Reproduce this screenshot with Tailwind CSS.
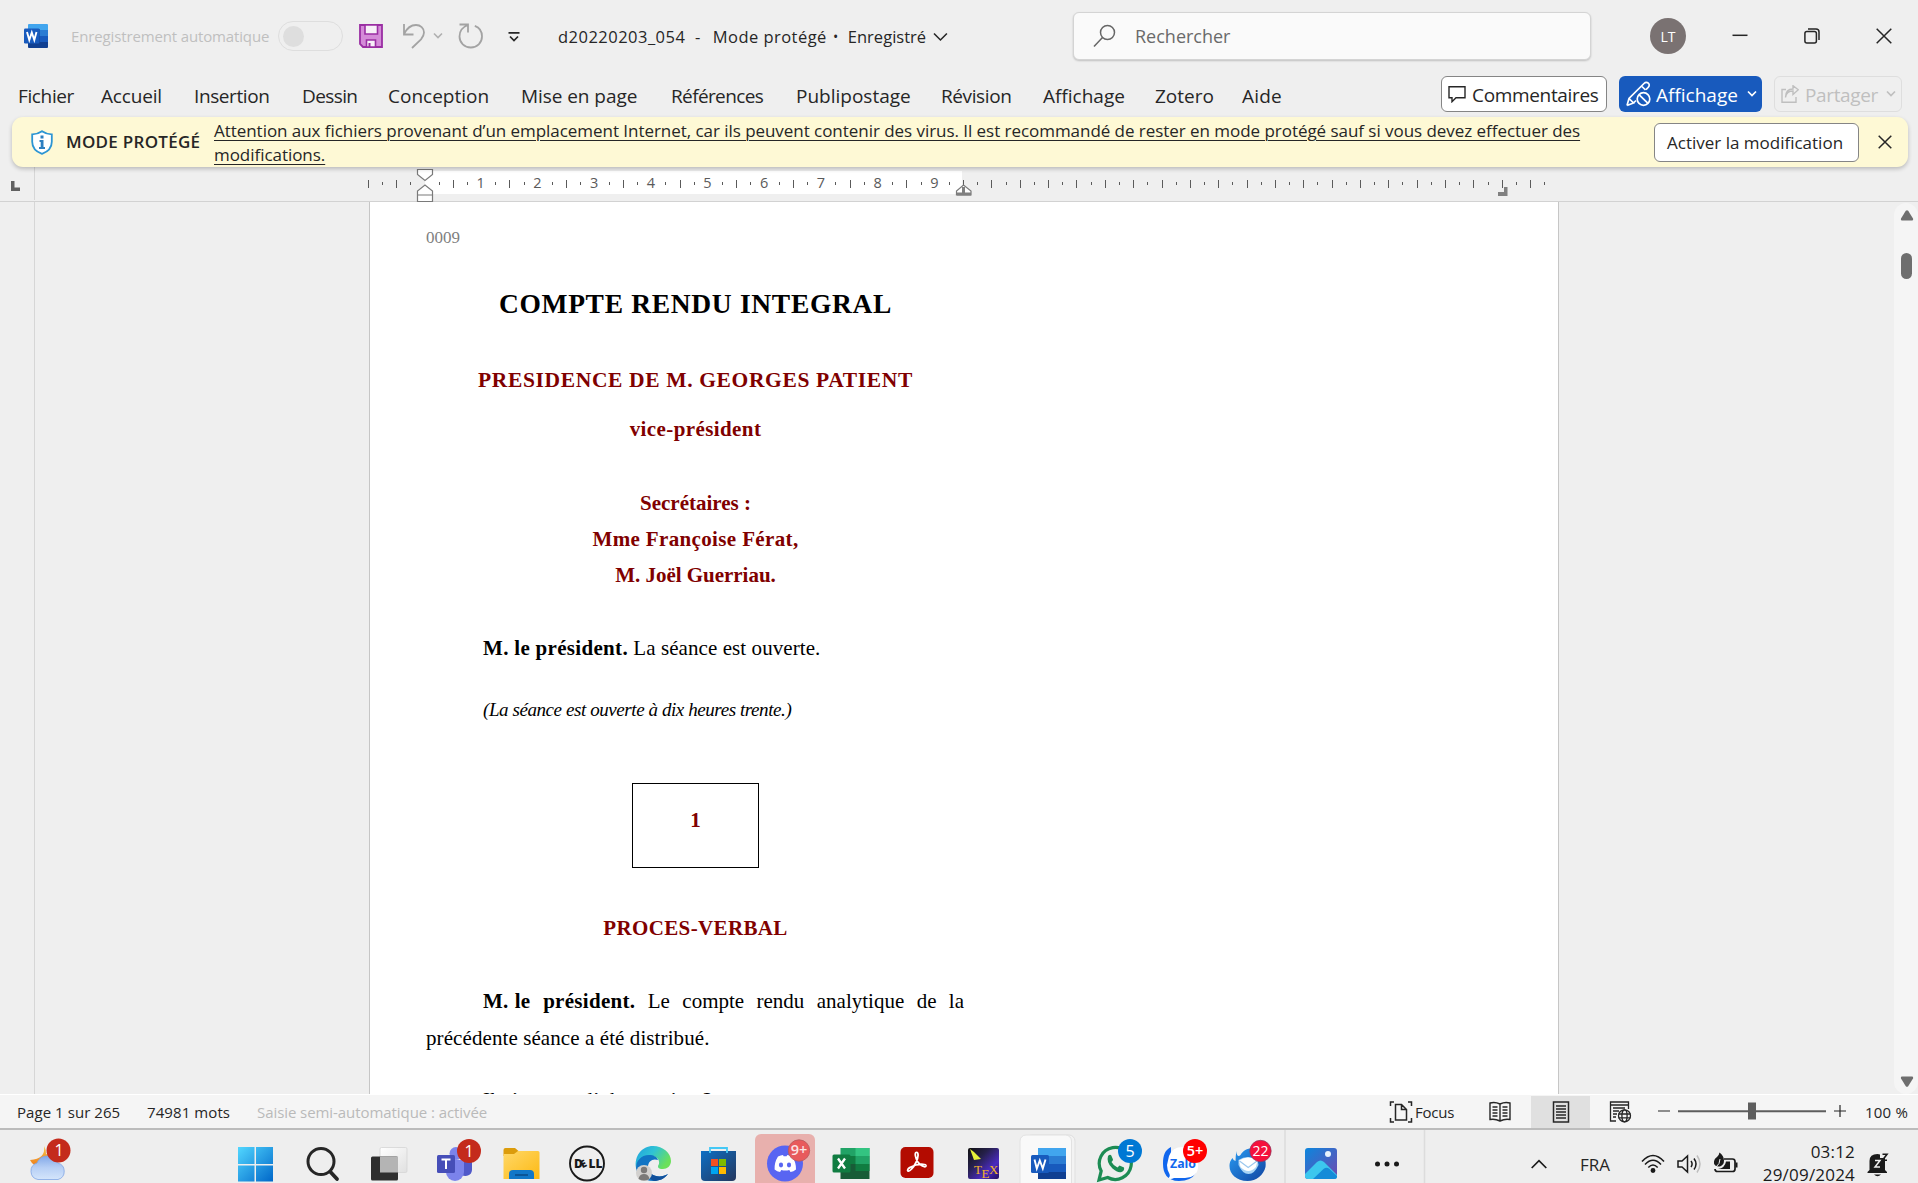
<!DOCTYPE html>
<html lang="fr">
<head>
<meta charset="utf-8">
<title>d20220203_054 - Word</title>
<script src="https://cdn.jsdelivr.net/npm/@tailwindcss/browser@4"></script>
</head>
<body class="w-[1918px] h-[1183px] overflow-hidden flex flex-col bg-[#efefef] font-['Open_Sans','Noto_Sans',sans-serif] text-[#262626] whitespace-nowrap">

<!-- Title bar -->
<header class="h-[70px] shrink-0 flex items-start">
  <svg class="w-[24px] h-[24px] ml-[24px] mt-[24px] shrink-0" viewBox="0 0 24 24">
    <path d="M5 0h18a1 1 0 0 1 1 1v5H4V1a1 1 0 0 1 1-1z" fill="#41a5ee"/><path d="M4 6h20v6H4z" fill="#2b7cd3"/><path d="M4 12h20v6H4z" fill="#185abd"/><path d="M4 18h20v5a1 1 0 0 1-1 1H5a1 1 0 0 1-1-1z" fill="#103f91"/>
    <path d="M5 5h11v14H5z" fill="#0b2f6b" opacity=".5"/><rect y="4.500" width="15.500" height="15" rx="1.200" fill="#185abd"/><path d="M3 8l2.300 8L7.800 8.500 10.300 16 12.500 8" fill="none" stroke="#fff" stroke-width="1.900"/>
  </svg>
  <span class="ml-[23px] w-[207px] text-[15px] tracking-[-0.14px] leading-[73px] text-[#bfbfbf]">Enregistrement automatique</span>
  <div class="w-[65px] h-[30px] mt-[21px] rounded-full border border-[#dedede] p-[4px] shrink-0"><div class="size-[21px] rounded-full bg-[#dedede]"></div></div>
  <svg class="w-[24px] h-[24px] ml-[16px] mt-[24px] shrink-0" viewBox="0 0 24 24"><path d="M1 1h22v22H4l-3-3z" fill="#d48bd8" stroke="#9a2ea3" stroke-width="1.800"/><path d="M6 1h12.500v9H6z" fill="#f7f0f8" stroke="#9a2ea3" stroke-width="1.600"/><path d="M7.500 23v-7h9v7z" fill="#f7f0f8" stroke="#9a2ea3" stroke-width="1.600"/><path d="M9.500 19h2v4h-2z" fill="#9a2ea3"/></svg>
  <svg class="w-[24px] h-[26px] ml-[19px] mt-[23px] shrink-0" viewBox="0 0 24 26" fill="none" stroke="#a3a3a3" stroke-width="1.800"><path d="M2 1v10.500h9.500M2 11C5 5 9 2 14 2c4.500 0 8 3.200 8 7.500 0 3-1.500 5-3 6.800L10 25"/></svg>
  <svg class="w-[10px] h-[7px] ml-[7px] mt-[32px] shrink-0" viewBox="0 0 10 7" fill="none" stroke="#b0b0b0" stroke-width="1.600"><path d="M1 1.500l4 4 4-4"/></svg>
  <svg class="w-[26px] h-[26px] ml-[15px] mt-[23px] shrink-0" viewBox="0 0 26 26" fill="none" stroke="#a3a3a3" stroke-width="1.800"><path d="M1.500 1.500h8.500v8M10 2C4.500 4 1.500 8.500 1.500 13.500c0 6.200 5 11 11.300 11S24 19.700 24 13.500c0-5-3-9.200-7.200-10.700"/></svg>
  <svg class="w-[12px] h-[12px] ml-[24px] mt-[31px] shrink-0" viewBox="0 0 12 12" fill="none" stroke="#262626" stroke-width="1.700"><path d="M.5 1.800h11M2 5.500l4 4 4-4"/></svg>
  <div class="flex ml-[38px] w-[390px] text-[16.500px] leading-[73px]">
    <span class="w-[138px] tracking-[0.48px]">d20220203_054</span><span class="w-[18px]">-</span><span class="w-[121px] tracking-[0.45px]">Mode protégé</span><span class="w-[15px] text-[14px]">•</span><span class="w-[86px] tracking-[0.02px]">Enregistré</span>
    <svg class="w-[15px] h-[10px] mt-[32px]" viewBox="0 0 15 10" fill="none" stroke="#262626" stroke-width="1.600"><path d="M1 1.500l6.500 6.500L14 1.500"/></svg>
  </div>
  <div class="ml-[125px] mt-[12px] w-[518px] h-[48px] rounded-[6px] bg-[#fafafa] border border-[#d4d4d4] shadow-[0_1px_2px_rgba(0,0,0,0.2)] flex items-center shrink-0">
    <svg class="w-[24px] h-[24px] ml-[19px]" viewBox="0 0 24 24" fill="none" stroke="#666" stroke-width="1.500"><circle cx="14.500" cy="8.500" r="7"/><path d="M9.500 13.500L1 22.500"/></svg>
    <span class="ml-[18px] mt-[1px] text-[18px] text-[#6a6a6a]">Rechercher</span>
  </div>
  <div class="ml-[59px] mt-[18px] size-[36px] rounded-full bg-[#7a7272] text-white text-[14px] leading-[37px] text-center shrink-0">LT</div>
  <svg class="w-[16px] h-[16px] ml-[46px] mt-[28px] shrink-0" viewBox="0 0 16 16" stroke="#262626" stroke-width="1.500"><path d="M.5 7.300h15"/></svg>
  <svg class="w-[16px] h-[16px] ml-[56px] mt-[28px] shrink-0" viewBox="0 0 16 16" fill="none" stroke="#262626" stroke-width="1.500"><rect x=".9" y="3.500" width="11.500" height="11.500" rx="2"/><path d="M4 1h8a3 3 0 0 1 3 3v8"/></svg>
  <svg class="w-[16px] h-[16px] ml-[56px] mt-[28px] shrink-0" viewBox="0 0 16 16" fill="none" stroke="#262626" stroke-width="1.500"><path d="M.7.700l14.600 14.600M15.300.700L.7 15.300"/></svg>
</header>

<!-- Ribbon tabs -->
<nav class="h-[47px] shrink-0 flex items-start">
  <div class="w-[1441px] pl-[18px] grid grid-cols-[83px_93px_108px_86px_133px_150px_125px_145px_102px_112px_87px_60px] text-[19px] leading-[53px] shrink-0">
    <span class="tracking-[-0.37px]">Fichier</span><span class="tracking-[-0.16px]">Accueil</span><span class="tracking-[-0.4px]">Insertion</span><span class="tracking-[-0.6px]">Dessin</span><span class="tracking-[0px]">Conception</span><span class="tracking-[-0.06px]">Mise en page</span><span class="tracking-[-0.62px]">Références</span><span>Publipostage</span><span class="tracking-[-0.39px]">Révision</span><span>Affichage</span><span>Zotero</span><span class="tracking-[0.2px]">Aide</span>
  </div>
  <div class="mt-[6px] flex gap-[12px] text-[19px] leading-[36px]">
    <div class="w-[166px] h-[36px] rounded-[6px] border border-[#858585] bg-white flex items-center pl-[6px]">
      <svg class="w-[18px] h-[18px] shrink-0" viewBox="0 0 18 18" fill="none" stroke="#262626" stroke-width="1.400"><path d="M1 1.700h16v11H8l-4 4v-4H1z"/></svg>
      <span class="ml-[6px] mt-[2px] tracking-[-0.33px]">Commentaires</span>
    </div>
    <div class="w-[143px] h-[36px] rounded-[6px] bg-[#185abd] text-white flex items-center pl-[7px]">
      <svg class="w-[25px] h-[26px] shrink-0" viewBox="0 0 25 26" fill="none" stroke="#fff" stroke-width="1.700"><path d="M1 24.500l2-7L18 2.500c1.500-1.500 3-1.500 4.300-.3s1.200 2.800-.2 4.300L20 8.700M15.500 5l4 4M3 17.500l4.500 4.500L1 24.500M7.500 22l2.500-2.500"/><circle cx="17.500" cy="18" r="6.300"/><path d="M13 13.700l9 8.700"/></svg>
      <span class="ml-[5px] mt-[2px] w-[91px]">Affichage</span>
      <svg class="w-[10px] h-[7px] mb-[1px]" viewBox="0 0 10 7" fill="none" stroke="#fff" stroke-width="1.700"><path d="M1 1.500l4 4 4-4"/></svg>
    </div>
    <div class="w-[128px] h-[36px] rounded-[6px] border border-[#dedede] text-[#bfbfbf] flex items-center pl-[6px]">
      <svg class="w-[18px] h-[18px] shrink-0" viewBox="0 0 18 18" fill="none" stroke="#bfbfbf" stroke-width="1.400"><path d="M5 4.500H1v12.800h14V12M4.500 12.500C5 8 7.500 6 12 6V9.500l5.300-4.700L12 .700V4C7 4 4.500 7 4.500 12.500z"/></svg>
      <span class="ml-[6px] mt-[2px] w-[81px] tracking-[-0.35px]">Partager</span>
      <svg class="w-[10px] h-[7px] mb-[1px]" viewBox="0 0 10 7" fill="none" stroke="#bfbfbf" stroke-width="1.700"><path d="M1 1.500l4 4 4-4"/></svg>
    </div>
  </div>
</nav>

<!-- Protected view banner -->
<section class="relative z-10 ml-[12px] w-[1896px] h-[50px] shrink-0 rounded-[11px] bg-[#fef9d5] shadow-[0_2px_4px_rgba(0,0,0,0.22)] flex items-center text-[17px]">
  <svg class="w-[22px] h-[25px] ml-[19px] shrink-0" viewBox="0 0 22 25"><path d="M11 1.200c3 2.100 6 3 9.800 3.200v7.300c0 5.800-4 10-9.800 12.200C5.200 21.700 1.200 17.500 1.200 11.700V4.400C5 4.200 8 3.300 11 1.200z" fill="#fff" stroke="#2c95d3" stroke-width="1.800"/><path d="M9.500 5.500h3v3h-3zM8.500 10h4v7h1.500v2H8v-2h1.700v-5H8.500z" fill="#2c7fc0"/></svg>
  <span class="ml-[13px] w-[148px] font-semibold tracking-[0.28px]">MODE PROTÉGÉ</span>
  <div class="w-[1380px] mt-[1px] leading-[24px] underline decoration-1 underline-offset-[3px] tracking-[-0.045px]">Attention aux fichiers provenant d’un emplacement Internet, car ils peuvent contenir des virus. Il est recommandé de rester en mode protégé sauf si vous devez effectuer des<br>modifications.</div>
  <div class="ml-[60px] w-[205px] h-[39px] rounded-[6px] border border-[#858585] bg-white pl-[12px] leading-[37px]">Activer la modification</div>
  <svg class="w-[14px] h-[14px] ml-[19px]" viewBox="0 0 14 14" stroke="#262626" stroke-width="1.500"><path d="M.7.700l12.600 12.600M13.300.700L.7 13.300"/></svg>
</section>

<!-- Ruler -->
<div class="h-[35px] shrink-0 border-b border-[#d2d2d2] flex">
  <div class="w-[35px] h-[33px] border-r border-[#d6d6d6] shrink-0">
    <svg class="w-[34px] h-[33px]" viewBox="0 0 34 33"><path d="M11 14h3.500v6.500H20V24h-9z" fill="#606060"/></svg>
  </div>
  <svg id="ruler" class="w-[1883px] h-[35px] shrink-0 overflow-visible" viewBox="35 167 1883 35">
    <rect x="425" y="171" width="537" height="23" fill="#fff"/>
    <g id="ticks" stroke="#5a5a5a" stroke-width="1"></g>
    <g id="nums" font-size="14.500" fill="#5a5a5a" text-anchor="middle"></g>
    <g fill="#fff" stroke="#7a7a7a" stroke-width="1.200"><path d="M417.500 169.500h15v5l-7.500 6-7.500-6zM417.500 201.500v-10.500l7.500-6 7.500 6v10.500zM417.500 195h15"/><path d="M956.500 195v-4l7-6 7.500 6v4z"/></g>
    <path d="M957 192.500h14v3h-14zM962 187h3v6h-3zM1498 192h6v-5h3.500v9H1498z" fill="#808080"/>
  </svg>
</div>

<!-- Document area -->
<main class="h-[893px] shrink-0 flex overflow-hidden border-b border-white">
  <div class="w-[35px] border-r border-[#d6d6d6] shrink-0"></div>
  <article class="ml-[334px] w-[1190px] shrink-0 bg-white border-x border-[#c6c6c6] pl-[56px] font-['Liberation_Serif',serif] text-[21px] leading-[36px] text-black">
    <div class="w-[539px]">
      <p class="mt-[18px] text-[17px] text-[#7f7f7f]">0009</p>
      <h1 class="mt-[30px] text-center text-[27.500px] font-bold tracking-[0.68px]">COMPTE RENDU INTEGRAL</h1>
      <h2 class="mt-[40px] text-center text-[21.500px] font-bold tracking-[0.64px] text-[#800000]">PRESIDENCE DE M. GEORGES PATIENT</h2>
      <p class="mt-[13px] text-center font-bold tracking-[0.4px] text-[#800000]">vice-président</p>
      <p class="mt-[38px] text-center font-bold text-[#800000]">Secrétaires :</p>
      <p class="text-center font-bold tracking-[0.36px] text-[#800000]">Mme Françoise Férat,</p>
      <p class="text-center font-bold tracking-[-0.02px] text-[#800000]">M. Joël Guerriau.</p>
      <p class="mt-[37px] pl-[57px] tracking-[0.08px]"><b class="tracking-[0.31px]">M. le président.</b> La séance est ouverte.</p>
      <p class="mt-[26px] pl-[57px] italic text-[19px] tracking-[-0.42px]">(La séance est ouverte à dix heures trente.)</p>
      <div class="mt-[55px] ml-[206px] w-[127px] h-[85px] border border-black pt-[18px] text-center font-bold text-[#800000]">1</div>
      <h2 class="mt-[42px] text-center font-bold tracking-[0.36px] text-[#800000]">PROCES-VERBAL</h2>
      <p class="mt-[37px] pl-[57px] pr-[1px] [text-align-last:justify]"><b class="tracking-[0.3px]">M.<span class="inline-block w-[6px]"></span>le président.</b> Le compte rendu analytique de la</p>
      <p class="mt-[1px] tracking-[0.09px]">précédente séance a été distribué.</p>
      <p class="mt-[26px] pl-[57px]">Il n’y a pas d’observation ?…</p>
    </div>
  </article>
  <div class="ml-[335px] w-[24px] h-[891px] mt-[1px] rounded-t-[12px] rounded-b-[12px] bg-[#f5f5f5] flex flex-col items-center pt-[7px] pb-[7px] pl-px shrink-0">
    <svg class="w-[14px] h-[11px]" viewBox="0 0 14 11"><path d="M5.800.8q1.200-1 2.400 0L13 8.500q.5 2-1 2H2q-1.500 0-1-2z" fill="#6e6e6e"/></svg>
    <div class="mt-[32px] w-[11px] h-[26px] rounded-full bg-[#6e6e6e]"></div>
    <svg class="w-[14px] h-[11px] mt-auto" viewBox="0 0 14 11"><path d="M5.800 10.200q1.200 1 2.400 0L13 2.500q.5-2-1-2H2q-1.500 0-1 2z" fill="#6e6e6e"/></svg>
  </div>
</main>

<!-- Status bar -->
<footer class="h-[35px] shrink-0 bg-[#f5f5f5] border-b-2 border-[#bcbcbc] flex items-center text-[15px]">
  <span class="ml-[17px] mt-[1px] w-[130px] tracking-[0.06px]">Page 1 sur 265</span>
  <span class="w-[110px] mt-[1px] tracking-[0.09px]">74981 mots</span>
  <span class="w-[1131px] mt-[1px] tracking-[-0.07px] text-[#bababa]">Saisie semi-automatique : activée</span>
  <svg class="w-[24px] h-[24px] ml-[1px] shrink-0" viewBox="0 0 24 24" fill="none" stroke="#262626" stroke-width="1.500"><path d="M5 2H1.500v4M1.500 18v4H5M19 2h3.500v4M22.500 18v4H19M6.500 4.500h6l5 5V20h-11zM12.500 4.500v5h5"/></svg>
  <span class="ml-[2px] mt-[1px] w-[74px] tracking-[-0.2px]">Focus</span>
  <svg class="w-[22px] h-[22px] shrink-0" viewBox="0 0 22 22" fill="none" stroke="#262626" stroke-width="1.400"><path d="M11 3Q6 .500 1 2v16.500q5-1 10 1.500 5-2.500 10-1.500V2Q16 .500 11 3zM11 3v17M3.500 6h5M3.500 9h5M3.500 12h5M3.500 15h5M13.500 6h5M13.500 9h5M13.500 12h5M13.500 15h5"/></svg>
  <div class="ml-[20px] w-[59px] h-[32px] bg-[#e0e0e0] flex items-center justify-center shrink-0"><svg class="w-[18px] h-[22px]" viewBox="0 0 18 22" fill="none" stroke="#262626" stroke-width="1.500"><path d="M1.500 1h15v20h-15zM4 5h10M4 8h10M4 11h10M4 14h10M4 17h10"/></svg></div>
  <svg class="w-[24px] h-[22px] ml-[19px] shrink-0" viewBox="0 0 24 22" fill="none" stroke="#262626" stroke-width="1.300"><path d="M7 20H1.500V1h18v7M1.500 4h18M4 7h12M4 10h6M4 13h4M4 16h3"/><circle cx="15.500" cy="14.800" r="6" fill="#f5f5f5"/><ellipse cx="15.500" cy="14.800" rx="2.600" ry="6"/><path d="M9.500 13h12M9.500 16.800h12"/></svg>
  <svg class="w-[190px] h-[20px] ml-[24px] shrink-0" viewBox="0 0 190 20" stroke="#5e5e5e"><path d="M1 9h12M177 9h12M183 3v12" stroke="#262626" stroke-width="1.200"/><path d="M21 9.300h148" stroke-width="2"/><path d="M91 .5h8v17h-8z" fill="#5e5e5e" stroke="none"/></svg>
  <span class="ml-[18px] mt-[1px] tracking-[0.2px]">100 %</span>
</footer>

<!-- Windows taskbar -->
<section class="h-[53px] shrink-0 bg-[#eee] flex overflow-hidden">
  <svg class="w-[222px] h-[53px] shrink-0" viewBox="0 0 222 53">
    <defs><linearGradient id="moon" x1="0" y1="0" x2="0" y2="1"><stop stop-color="#f7c548"/><stop offset="1" stop-color="#ef7d1a"/></linearGradient><linearGradient id="cld" x1="0" y1="0" x2="0" y2="1"><stop stop-color="#82a8e8"/><stop offset=".5" stop-color="#b7cff5"/><stop offset="1" stop-color="#d4e5fb"/></linearGradient></defs>
    <path d="M44 16q2 13-14 14 4 8 14 6l10-10-8-2q0-5-2-8z" fill="url(#moon)"/>
    <path d="M38 49.500a8.500 8.500 0 0 1-1-16.500 11 11 0 0 1 20.500 0A8.500 8.500 0 0 1 58 49.500z" fill="url(#cld)" stroke="#7fa4e4" stroke-width=".8"/>
    <circle cx="58.500" cy="20.500" r="12" fill="#c42b1c"/><text x="59" y="26" font-size="16" fill="#fff" text-anchor="middle">1</text>
  </svg>
  <!-- Start -->
  <svg class="w-[66px] h-[53px] shrink-0" viewBox="0 0 66 53"><defs><linearGradient id="win" x1="0" y1="0" x2="1" y2="1"><stop stop-color="#52d7ff"/><stop offset="1" stop-color="#0067c9"/></linearGradient></defs><path d="M16 17h16.500v17H16zM34 17h17v17H34zM16 35.500h16.500v16H16zM34 35.500h17v16H34z" fill="url(#win)"/></svg>
  <!-- Search -->
  <svg class="w-[66px] h-[53px] shrink-0" viewBox="0 0 66 53" fill="none" stroke="#262626"><circle cx="33" cy="31.500" r="13" stroke-width="3"/><path d="M42.500 42l6.500 7" stroke-width="3.800" stroke-linecap="round"/></svg>
  <!-- Task view -->
  <svg class="w-[66px] h-[53px] shrink-0" viewBox="0 0 66 53"><defs><linearGradient id="tv" x1="0" y1="0" x2="1" y2="1"><stop stop-color="#fff"/><stop offset="1" stop-color="#e0e0e0"/></linearGradient></defs><rect x="26" y="17.500" width="27" height="25" rx="1.500" fill="url(#tv)" stroke="#d4d4d4" stroke-width=".8"/><rect x="17" y="26.500" width="27" height="24" rx="1.500" fill="#2e2e2e"/><path d="M26 26.500h18v16H26z" fill="#b4b4b4"/></svg>
  <!-- Teams -->
  <svg class="w-[66px] h-[53px] shrink-0" viewBox="0 0 66 53"><circle cx="36" cy="23.500" r="6.500" fill="#7b83eb"/><circle cx="47" cy="24" r="4.500" fill="#5059c9"/><path d="M42 30h10v10a6.500 6.500 0 0 1-10 5z" fill="#5059c9"/><path d="M26 30h18v12a9 9 0 0 1-18 0z" fill="#7b83eb"/><rect x="17" y="25" width="18" height="18" rx="1.500" fill="#464eb8"/><path d="M21.500 29.500h9M26 29.500V39" stroke="#fff" stroke-width="2"/><circle cx="49" cy="21" r="12" fill="#c42b1c"/><text x="49" y="26.500" font-size="16" fill="#fff" text-anchor="middle">1</text></svg>
  <!-- Explorer -->
  <svg class="w-[66px] h-[53px] shrink-0" viewBox="-1 0 66 53"><defs><linearGradient id="fol" x1="0" y1="0" x2="1" y2="1"><stop stop-color="#ffd868"/><stop offset="1" stop-color="#fdb913"/></linearGradient></defs><path d="M16.500 20a2 2 0 0 1 2-2H28l3.500 3-3.500 5H16.500z" fill="#dc9c0b"/><path d="M16.500 24H27l4-3h20a1.500 1.500 0 0 1 1.500 1.500V49h-36z" fill="url(#fol)"/><path d="M22 49v-5a4 4 0 0 1 4-4h17a4 4 0 0 1 4 4v5z" fill="#1177c8"/><path d="M28 45h13" stroke="#0a4a86" stroke-width="1.500"/></svg>
  <!-- Dell -->
  <svg class="w-[66px] h-[53px] shrink-0" viewBox="-2 0 66 53"><circle cx="33" cy="33.500" r="17" fill="none" stroke="#1a1a1a" stroke-width="1.900"/><g font-size="12" font-weight="800" fill="#1a1a1a"><text x="20" y="38">D</text><text x="0" y="0" transform="translate(28.500 38.500) rotate(-28)" font-size="10.500">E</text><text x="34.500" y="38">LL</text></g></svg>
  <!-- Edge -->
  <svg class="w-[66px] h-[53px] shrink-0" viewBox="-1 0 66 53"><defs><linearGradient id="e1" x1="0" y1="0" x2="1" y2=".5"><stop stop-color="#1f9fe0"/><stop offset=".5" stop-color="#30c3d4"/><stop offset="1" stop-color="#6be05a"/></linearGradient></defs><path d="M17 38C15 26 23 16 34 16c10 0 18 7 18 15 0 5-4 8-8 8-5 0-6-2-4-5 1-5-3-8-8-8-8 0-14 5-15 12z" fill="url(#e1)"/><path d="M17 38c0-7 5-13 13-13 5 0 8 2 9 5-5-2-10 1-10 7 0 9 12 12 20 7-4 5-9 7-15 7-9 0-16-5-17-13z" fill="#1174c4"/><path d="M29 37c0 9 12 12 20 7-4 5-9 7-14 7-7-3-9-9-6-14z" fill="#11509b"/><circle cx="25" cy="43" r="8" fill="#d2d0ce"/><circle cx="25" cy="40" r="3.200" fill="#7b7978"/><path d="M19.500 49q1-5 5.500-5t5.500 5q-5.500 3-11 0z" fill="#7b7978"/></svg>
  <!-- Store -->
  <svg class="w-[66px] h-[53px] shrink-0" viewBox="0 0 66 53"><defs><linearGradient id="st" x1="0" y1="0" x2="1" y2="1"><stop stop-color="#0d6fc4"/><stop offset="1" stop-color="#25375e"/></linearGradient></defs><path d="M17 21h35v26a4 4 0 0 1-4 4H21a4 4 0 0 1-4-4z" fill="url(#st)"/><path d="M26 23v-5h17v5" fill="none" stroke="#44c8f5" stroke-width="1.800"/><path d="M27 29h7v7h-7z" fill="#f25022"/><path d="M35 29h7v7h-7z" fill="#7fba00"/><path d="M27 37h7v7h-7z" fill="#00a4ef"/><path d="M35 37h7v7h-7z" fill="#ffb900"/></svg>
  <!-- Discord -->
  <svg class="w-[66px] h-[53px] shrink-0" viewBox="-2 0 66 53"><rect x="3" y="4" width="60" height="60" rx="6" fill="#e8b0ad"/><circle cx="33" cy="33.500" r="18" fill="#5865f2"/><path d="M26 26.500q3-1.500 5-1.500l.6 1.200h3l.6-1.200q2 0 5 1.500 4 6 3.800 13-2.500 2-5.500 2.500l-1.200-2q-4 1-8 0l-1.200 2q-3-.5-5.500-2.500-.4-7 3.400-13z" fill="#fff"/><ellipse cx="29" cy="35" rx="2.100" ry="2.400" fill="#5865f2"/><ellipse cx="37" cy="35" rx="2.100" ry="2.400" fill="#5865f2"/><circle cx="47" cy="20.500" r="10.700" fill="#e85a5c" stroke="#b65a5e" stroke-width=".8"/><text x="47" y="25.300" font-size="14.500" font-weight="600" fill="#fbe4e4" text-anchor="middle">9+</text></svg>
  <!-- Excel -->
  <svg class="w-[66px] h-[53px] shrink-0" viewBox="-1.500 0 66 53"><path d="M23 18h29v8H23z" fill="#21a366"/><path d="M38 18h14v8H38z" fill="#33c481"/><path d="M23 26h29v8H23z" fill="#107c41"/><path d="M38 26h14v8H38z" fill="#21a366"/><path d="M23 34h29v15H23z" fill="#185c37"/><path d="M38 34h14v7H38z" fill="#107c41"/><rect x="15" y="24.500" width="18" height="18" rx="1.500" fill="#107c41"/><path d="M20.500 28.500l7 10M27.500 28.500l-7 10" stroke="#fff" stroke-width="2.300"/></svg>
  <!-- Acrobat -->
  <svg class="w-[66px] h-[53px] shrink-0" viewBox="-2 0 66 53"><rect x="16.500" y="17" width="33" height="31" rx="5" fill="#b30b00"/><path d="M32 22.500c3-1 2.500 5 0 10-2.500 5-6.500 9.500-8 8.500-2-2 4-5 8-6 5-1.200 10.500-1 10 1-.7 2.200-6-.5-8.500-4.500-2-3.500-3-8.500-1.500-9z" fill="none" stroke="#fff" stroke-width="1.800"/></svg>
  <!-- TeX -->
  <svg class="w-[66px] h-[53px] shrink-0" viewBox="-4 0 66 53"><defs><linearGradient id="tx" x1="0" y1="0" x2="1" y2="1"><stop stop-color="#111"/><stop offset=".35" stop-color="#25204a"/><stop offset=".7" stop-color="#4a2bc0"/><stop offset="1" stop-color="#231060"/></linearGradient></defs><rect x="16" y="18" width="31" height="31" rx="2" fill="url(#tx)"/><path d="M18 19l4 3 7 7-7 1z" fill="#e6f23a"/><g font-family="Liberation Serif,serif" font-size="13" fill="#f0b429"><text x="22" y="44">T</text><text x="29.500" y="48">E</text><text x="37" y="44">X</text></g></svg>
  <!-- Word, active -->
  <svg class="w-[66px] h-[53px] shrink-0" viewBox="0 0 66 53"><rect x="12" y="5" width="49" height="60" rx="6" fill="#f3f3f3" stroke="#dfdfdf"/><rect x="6" y="5" width="51.500" height="60" rx="6" fill="#f9f9f9" stroke="#e2e2e2"/><path d="M24 18h28v8H24z" fill="#41a5ee"/><path d="M24 26h28v8H24z" fill="#2b7cd3"/><path d="M24 34h28v8H24z" fill="#185abd"/><path d="M24 42h28v7H24z" fill="#103f91"/><rect x="17" y="25" width="18" height="18" rx="1.500" fill="#185abd"/><path d="M20.500 29.500l2.300 9 3-8 3 8 2.700-9" fill="none" stroke="#fff" stroke-width="1.900"/></svg>
  <!-- WhatsApp -->
  <svg class="w-[66px] h-[53px] shrink-0" viewBox="-1 0 66 53"><path d="M18 50l2.200-9a16 16 0 1 1 6.500 6.500z" fill="#eee" stroke="#1c8c54" stroke-width="3.200"/><path d="M27 26q2-2 3.300-.5l1.700 4q0 1.200-1.500 2.500 2.200 4 6 5.500l2-2 4.500 2q.8 3-2.500 4.500-4 1-9-3.500-6.500-6-4.500-12.500z" fill="#1c8c54"/><circle cx="49" cy="21" r="12" fill="#0078d4"/><text x="49" y="26.500" font-size="16" fill="#fff" text-anchor="middle">5</text></svg>
  <!-- Zalo -->
  <svg class="w-[66px] h-[53px] shrink-0" viewBox="0 0 66 53"><path d="M25 17c-6 3-8 8-8 17s4 17 16 17q12 0 17-8l-25 2z" fill="#1167ee"/><path d="M23 26q3-9 14-9h9q6 1 6 9v11q0 10-13 11H28q-3 1.500-6 .5 2.500-2 1.500-4.500-2.500-4-2.500-9z" fill="#fff"/><text x="24" y="38" font-size="11.500" font-weight="700" fill="#1167ee" textLength="26" lengthAdjust="spacingAndGlyphs">Zalo</text><circle cx="49" cy="21" r="12" fill="#f00"/><text x="49" y="26" font-size="14.500" fill="#fff" font-weight="600" text-anchor="middle">5+</text></svg>
  <!-- Thunderbird -->
  <svg class="w-[66px] h-[53px] shrink-0" viewBox="-1.500 0 66 53"><defs><linearGradient id="tb" x1="0" y1="0" x2="1" y2="1"><stop stop-color="#2a9df4"/><stop offset="1" stop-color="#1043a0"/></linearGradient></defs><path d="M23 21c0 5 2 6 4 4 3-5 9-8 16-6 8 5 10 12 9 18-2 8-9 14-18 14-11 0-18-7-18-15q0-5 3-8 1 3 3 3 0-5 1-10z" fill="url(#tb)"/><path d="M25 30q9-6 19 0l1 5q-4 9-10 9t-10-9z" fill="#a9d4f5"/><path d="M25.500 30.500q9.500-6 18.500 0l-1.500 6.500q-7.500 8-15.500 0z" fill="#fff"/><path d="M26 31l8.700 6.500L43.500 31" fill="none" stroke="#9cc8ee" stroke-width="1.200"/><circle cx="47" cy="21" r="10.700" fill="#f5103c" stroke="#8b3b60" stroke-width=".7"/><text x="47" y="26" font-size="14" fill="#fff" text-anchor="middle" font-weight="500">22</text></svg>
  <!-- Photos and overflow -->
  <svg class="w-[148px] h-[53px] shrink-0" viewBox="1278 1130 148 53"><defs><linearGradient id="ph" x1="0" y1="0" x2="1" y2="1"><stop stop-color="#0c86dd"/><stop offset="1" stop-color="#7049b0"/></linearGradient></defs><path d="M1285 1130v53M1424.500 1130v53" stroke="#dcdcdc" stroke-width="1.500"/><rect x="1305" y="1148" width="32" height="31" rx="3" fill="url(#ph)"/><path d="M1305 1174l12-12q3.500-3 7 0l13 13v1.500q0 2.500-3 2.500h-26q-3 0-3-3z" fill="#3cc7ee"/><path d="M1313 1179l10.500-10q3-2.500 6 0l7.500 7q0 3-3 3z" fill="#148bd8"/><circle cx="1328" cy="1154" r="3" fill="#e7f3fc"/><g fill="#1a1a1a"><circle cx="1377.500" cy="1164" r="2.500"/><circle cx="1387" cy="1164" r="2.500"/><circle cx="1396.500" cy="1164" r="2.500"/></g></svg>
  <!-- System tray -->
  <svg class="w-[16px] h-[10px] ml-[105px] mt-[29px] shrink-0" viewBox="0 0 16 10" fill="none" stroke="#1a1a1a" stroke-width="1.700"><path d="M.7 9L8 1.700 15.300 9"/></svg>
  <span class="ml-[33px] mt-[22px] w-[61px] text-[17px] leading-[26px]">FRA</span>
  <svg class="w-[24px] h-[20px] mt-[24px] shrink-0" viewBox="0 0 24 20" fill="none" stroke="#1a1a1a" stroke-width="1.500"><path d="M1 7.500q11-12 22 0M4 10.500q8-8.500 16 0M7.300 13.500q4.700-5 9.400 0"/><circle cx="12" cy="16.500" r="1.700" fill="#1a1a1a"/></svg>
  <svg class="w-[25px] h-[20px] ml-[12px] mt-[24px] shrink-0" viewBox="0 0 25 20" fill="none" stroke="#1a1a1a" stroke-width="1.500"><path d="M1 7h4l5.500-5v16L5 13H1z"/><path d="M14 7q2.200 3 0 6M17 4.500q4 5.500 0 11"/><path d="M20 1.500q6 8.500 0 17" stroke="#bdbdbd"/></svg>
  <svg class="w-[26px] h-[22px] ml-[11px] mt-[22px] shrink-0" viewBox="0 0 26 22"><path d="M11 7h8.500a2.500 2.500 0 0 1 2.500 2.500V17a2.500 2.500 0 0 1-2.500 2.500H4.500Q2 19.500 2 17" fill="none" stroke="#1a1a1a" stroke-width="1.700"/><path d="M22.500 10.500h2v5h-2zM5 17h12V9.500h-4Q12 16 5 17z" fill="#1a1a1a"/><path d="M6.500.500q4.500 3.500 4.500 8t-4 6q-5 .5-6-3Q.500 7 4 5q2-1.500 2.500-4.500z" fill="#1a1a1a"/><path d="M7 7q0 5-4 8" stroke="#eee" fill="none"/></svg>
  <div class="ml-[16px] w-[100px] mt-[10px] text-right text-[17px] leading-[23px] tracking-[0.2px] text-[#1a1a1a]">03:12<br>29/09/2024</div>
  <svg class="w-[22px] h-[24px] ml-[12px] mt-[23px] shrink-0" viewBox="0 0 22 24"><path d="M2.500 17V8q0-7 8-7l2.500.5v3.500h5V17l2 2v1H.5v-1zM7 21.500h7q-3.500 3.500-7 0z" fill="#1a1a1a"/><path d="M8 7.500h5l-5 6.500h5" fill="none" stroke="#eee" stroke-width="1.500"/><path d="M15.500 1.200h4.500l-4.500 6h4.500" fill="none" stroke="#1a1a1a" stroke-width="1.600"/></svg>
</section>

<script>
// Ruler graduations: one unit is four quarter-steps; units 1 to 9 carry a number.
const step = 14.175, zero = 424.4, ns = 'http://www.w3.org/2000/svg';
const ticks = document.getElementById('ticks'), nums = document.getElementById('nums');
for (let k = -4; k <= 79; k++) {
  if (k === 0) continue;
  const x = zero + k * step;
  if (k > 0 && k <= 36 && k % 4 === 0) {
    const t = document.createElementNS(ns, 'text');
    t.setAttribute('x', x - 0.4); t.setAttribute('y', 188); t.textContent = k / 4;
    nums.appendChild(t);
  } else {
    const l = document.createElementNS(ns, 'line'), px = Math.round(x) + 0.5, tall = k % 2 === 0;
    l.setAttribute('x1', px); l.setAttribute('x2', px);
    l.setAttribute('y1', tall ? 180 : 182); l.setAttribute('y2', tall ? 188 : 185);
    ticks.appendChild(l);
  }
}
</script>
</body>
</html>
